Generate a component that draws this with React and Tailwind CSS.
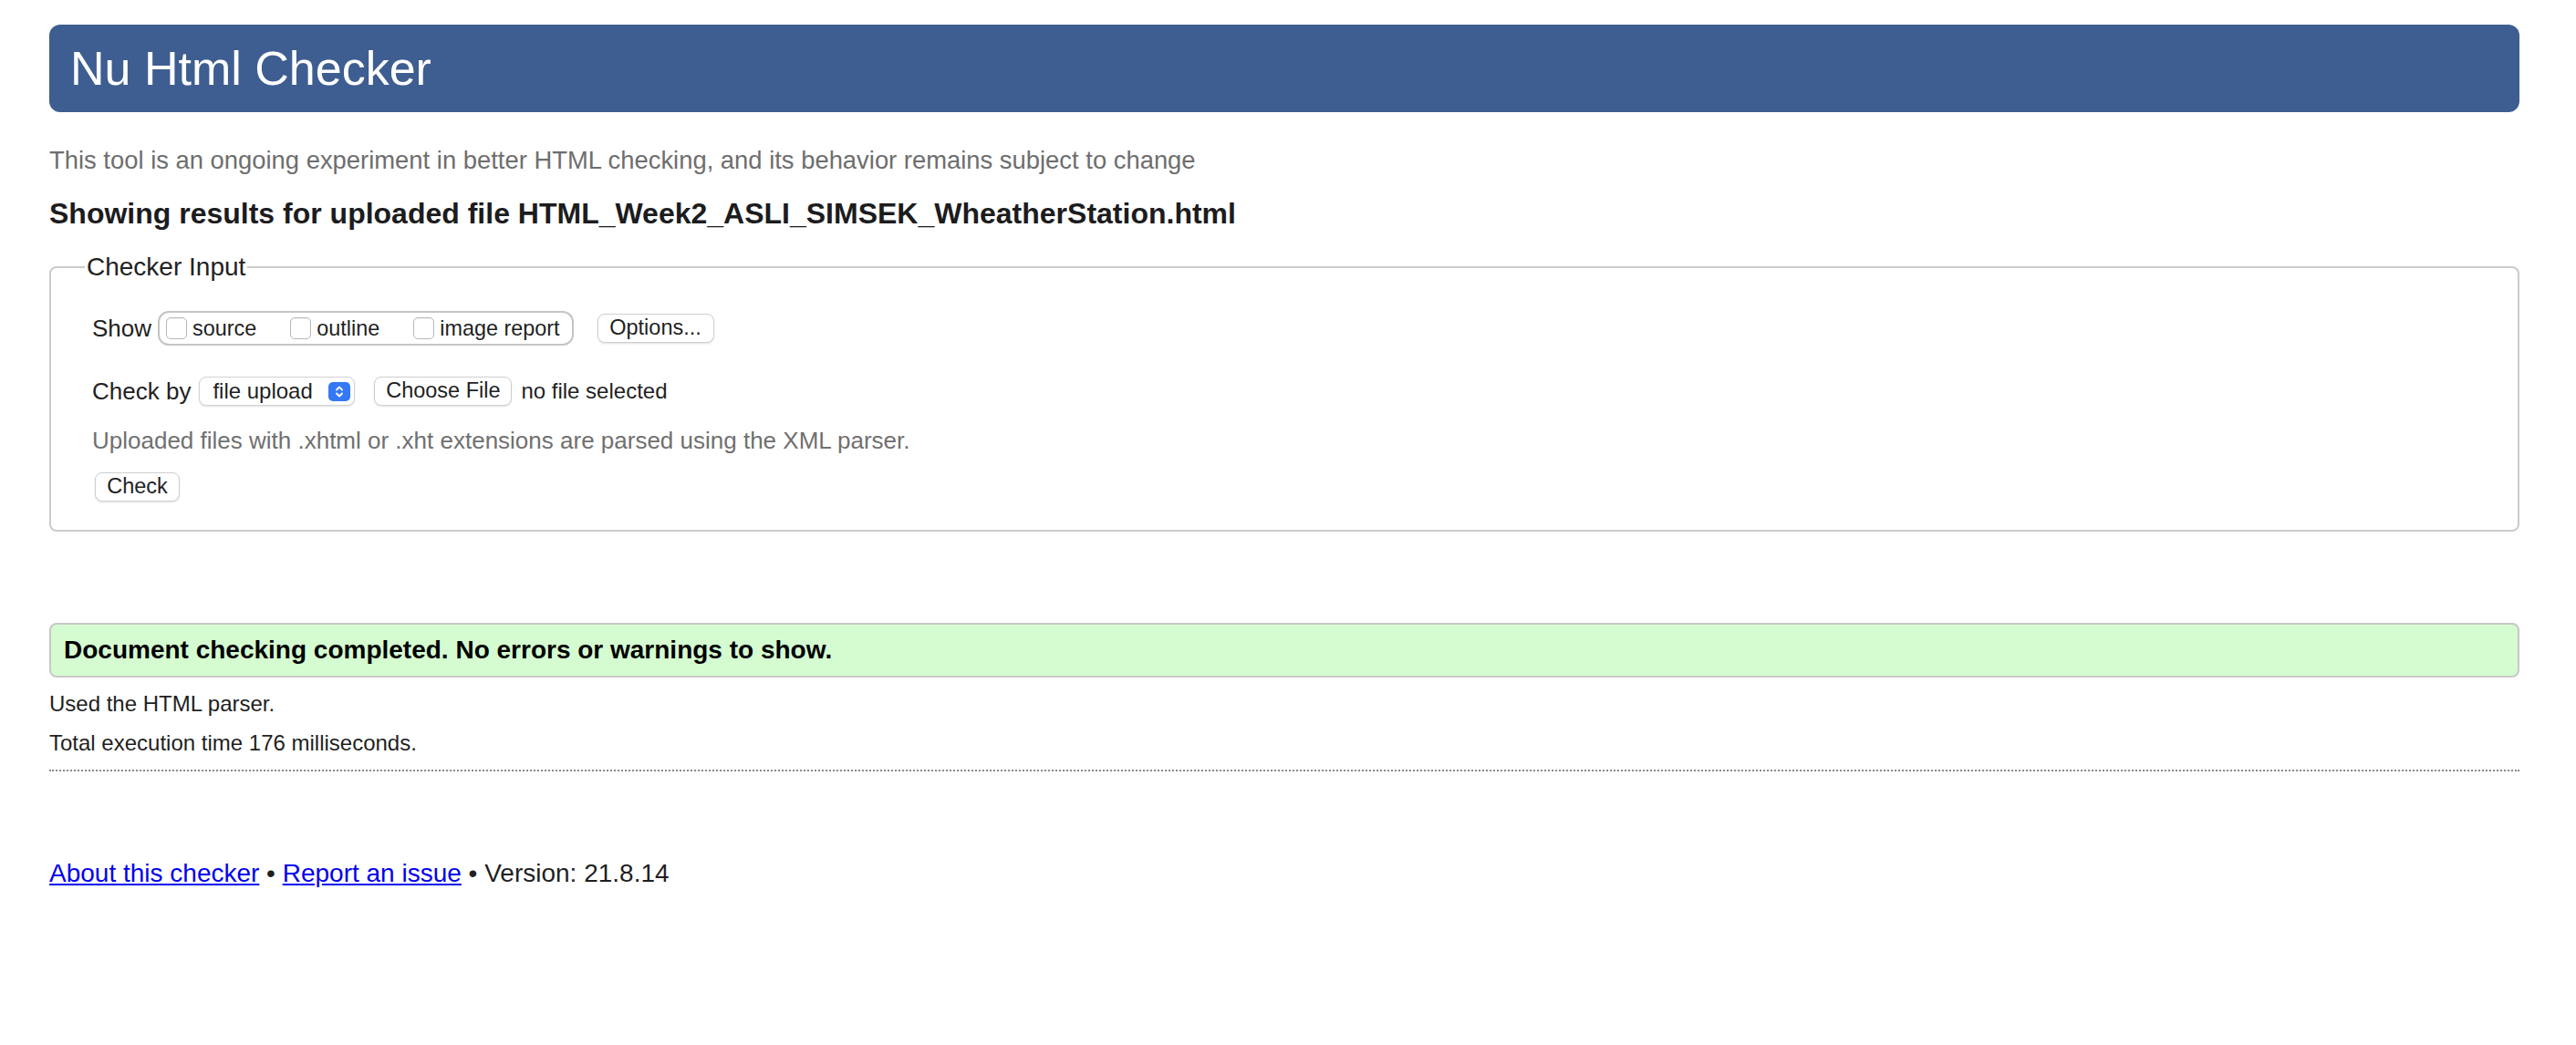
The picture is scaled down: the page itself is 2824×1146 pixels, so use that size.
import React from 'react';

const Checkbox = ({ label }) => (
  <label className="flex items-center gap-[6px]">
    <span className="h-[24px] w-[23px] rounded-[5px] border border-[#b8b8b8] bg-white shadow-[inset_0_1px_1px_rgba(0,0,0,0.06)]" />
    <span className="text-[23.4px] leading-[28px] text-[#1f1f1f]">{label}</span>
  </label>
);

const Button = ({ children, className = '' }) => (
  <button
    type="button"
    className={`flex h-[32px] items-center justify-center rounded-[8px] border border-[#cfcfcf] bg-white text-[23.5px] text-[#1f1f1f] shadow-[0_1px_2px_rgba(0,0,0,0.12)] ${className}`}
  >
    {children}
  </button>
);

const App = () => {
  return (
    <div className="min-h-screen bg-white pl-[54px] pr-[62px] pt-[27px] font-['Liberation_Sans',Arial,sans-serif] text-[#222]">
      <header className="flex h-[96px] items-center rounded-[12px] bg-[#3e5e91] pl-[23px]">
        <h1 className="text-[52px] leading-[60px] text-white">Nu Html Checker</h1>
      </header>

      <p className="mt-[37px] text-[27.4px] leading-[32px] text-[#6e6e6e]">
        This tool is an ongoing experiment in better HTML checking, and its behavior remains subject to change
      </p>
      <h2 className="mt-[23px] text-[32px] font-bold leading-[38px] text-[#1c1c1e]">
        Showing results for uploaded file HTML_Week2_ASLI_SIMSEK_WheatherStation.html
      </h2>

      <fieldset className="mt-[24px] rounded-[8px] border-2 border-[#cbcbcb] pb-[31px] pl-[45px]">
        <legend className="ml-[-8px] px-[2px] text-[28px] leading-[32px] text-[#222]">Checker Input</legend>

        <div className="mt-[32px] flex h-[38px] items-center">
          <span className="text-[26px] leading-[30px]">Show</span>
          <div className="ml-[7px] flex h-[38px] items-center gap-[37px] rounded-[12px] border-2 border-[#c4c4c4] pl-[7px] pr-[13px]">
            <Checkbox label="source" />
            <Checkbox label="outline" />
            <Checkbox label="image report" />
          </div>
          <Button className="ml-[26px] w-[128px]">Options...</Button>
        </div>

        <div className="mt-[34px] flex h-[32px] items-center">
          <span className="text-[26px] leading-[30px]">Check by</span>
          <div className="ml-[9px] flex h-[32px] w-[171px] items-center justify-between rounded-[8px] border border-[#d2d2d2] bg-white pl-[14px] pr-[4px] shadow-[0_1px_2px_rgba(0,0,0,0.12)]">
            <span className="text-[24px] text-[#1f1f1f]">file upload</span>
            <span className="flex h-[21px] w-[24px] items-center justify-center rounded-[5px] bg-[#3478f6]">
              <svg width="10" height="15" viewBox="0 0 10 15" fill="none" stroke="white" strokeWidth="1.8" strokeLinecap="round" strokeLinejoin="round">
                <path d="M2 5.5 L5 2.5 L8 5.5" />
                <path d="M2 9.5 L5 12.5 L8 9.5" />
              </svg>
            </span>
          </div>
          <Button className="ml-[21px] w-[151px]">Choose File</Button>
          <span className="ml-[10px] text-[24px] text-[#1f1f1f]">no file selected</span>
        </div>

        <p className="mt-[23px] text-[26px] leading-[30px] text-[#707070]">
          Uploaded files with .xhtml or .xht extensions are parsed using the XML parser.
        </p>
        <Button className="ml-[3px] mt-[20px] w-[93px]">Check</Button>
      </fieldset>

      <div className="mt-[100px] flex h-[60px] items-center rounded-[8px] border-2 border-[#c8c8c8] bg-[#d5fbd0] px-[14px]">
        <span className="text-[28px] font-bold leading-[32px] text-black">
          Document checking completed. No errors or warnings to show.
        </span>
      </div>

      <p className="mt-[15px] text-[24px] leading-[28px] text-[#1f1f1f]">Used the HTML parser.</p>
      <p className="mt-[15px] text-[24px] leading-[28px] text-[#1f1f1f]">Total execution time 176 milliseconds.</p>
      <hr className="mt-[15px] border-0 border-t-2 border-dotted border-[#8a8a8a]" />

      <p className="mt-[95px] text-[28px] leading-[34px] text-[#1f1f1f]">
        <a href="#" className="text-[#0000ee] underline">About this checker</a>
        {' • '}
        <a href="#" className="text-[#0000ee] underline">Report an issue</a>
        {' • Version: 21.8.14'}
      </p>
    </div>
  );
};

export default App;
